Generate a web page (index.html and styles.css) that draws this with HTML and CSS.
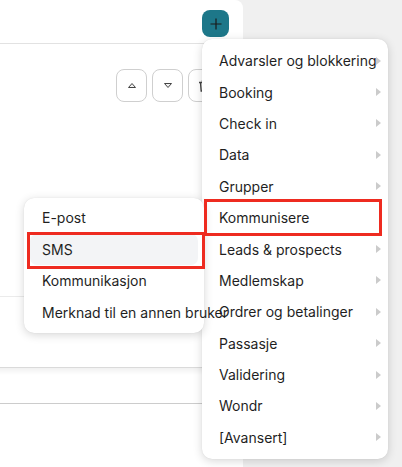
FILE: index.html
```html
<!DOCTYPE html>
<html lang="no">
<head>
    <meta charset="UTF-8">
    <meta name="viewport" content="width=device-width, initial-scale=1.0">
    <title>Legg til handling</title>
    <link rel="stylesheet" href="styles.css">
</head>
<body>
    <div class="panel">
        <div class="panel-head">
            <button class="add-btn" aria-label="Legg til">
                <svg width="12" height="12" viewBox="0 0 12 12"><path d="M6 0.5v11M0.5 6h11" stroke="#1a1a1a" stroke-width="1.2"/></svg>
            </button>
        </div>
        <div class="toolbar">
            <button class="tool-btn" aria-label="Flytt opp">
                <svg width="10" height="7" viewBox="0 0 10 7"><path d="M1.5 5.5h7L5 1.5z" fill="#f2f2f2" stroke="#444" stroke-width="1" stroke-linejoin="round"/></svg>
            </button>
            <button class="tool-btn" aria-label="Flytt ned">
                <svg width="10" height="7" viewBox="0 0 10 7"><path d="M1.5 1.5h7L5 5.5z" fill="#f2f2f2" stroke="#444" stroke-width="1" stroke-linejoin="round"/></svg>
            </button>
            <button class="tool-btn" aria-label="Slett">
                <svg width="12" height="12" viewBox="0 0 12 12"><path d="M1 2.5h10M4.5 2.5V1h3v1.5M2.5 2.5l0.7 8.5h5.6l0.7-8.5" fill="none" stroke="#444" stroke-width="1.4"/></svg>
            </button>
        </div>
        <div class="section"></div>
        <div class="section-shade"></div>
        <div class="section-last"></div>
    </div>

    <ul class="menu main-menu">
        <li class="menu-item has-sub">Advarsler og blokkering</li>
        <li class="menu-item has-sub">Booking</li>
        <li class="menu-item has-sub">Check in</li>
        <li class="menu-item has-sub">Data</li>
        <li class="menu-item has-sub">Grupper</li>
        <li class="menu-item">Kommunisere</li>
        <li class="menu-item has-sub">Leads &amp; prospects</li>
        <li class="menu-item has-sub">Medlemskap</li>
        <li class="menu-item has-sub">Ordrer og betalinger</li>
        <li class="menu-item has-sub">Passasje</li>
        <li class="menu-item has-sub">Validering</li>
        <li class="menu-item has-sub">Wondr</li>
        <li class="menu-item has-sub">[Avansert]</li>
    </ul>

    <ul class="menu sub-menu">
        <li class="menu-item">E-post</li>
        <li class="menu-item is-hover">SMS</li>
        <li class="menu-item">Kommunikasjon</li>
        <li class="menu-item">Merknad til en annen bruker</li>
    </ul>

    <div class="mark mark-main"></div>
    <div class="mark mark-sub"></div>
</body>
</html>
```

FILE: styles.css
```css
body {
    margin: 0;
    width: 402px;
    height: 467px;
    overflow: hidden;
    position: relative;
    background: #f0f0f0;
    font-family: Inter, "Noto Sans", sans-serif;
    font-size: 14px;
    color: #1f1f1f;
}
.panel {
    width: 243px;
    height: 467px;
    background: #fff;
    border-top-right-radius: 8px;
    display: flex;
    flex-direction: column;
}
.panel-head {
    height: 44px;
    border-bottom: 1px solid #e2e2e2;
    display: flex;
    justify-content: flex-end;
    align-items: flex-start;
    padding: 10px 14px 0 0;
    box-sizing: border-box;
}
.add-btn {
    width: 27px;
    height: 27px;
    border: 0;
    border-radius: 8px;
    background: #1d7789;
    display: flex;
    align-items: center;
    justify-content: center;
    padding: 0;
}
.toolbar {
    display: flex;
    justify-content: flex-end;
    gap: 5px;
    padding: 25px 24px 0 0;
    height: 253px;
    box-sizing: border-box;
    border-bottom: 1px solid #ebebeb;
}
.tool-btn {
    width: 31px;
    height: 33px;
    border: 1px solid #cfcfcf;
    border-radius: 8px;
    background: #fff;
    display: flex;
    align-items: center;
    justify-content: center;
    padding: 0;
}
.section {
    height: 70px;
}
.section-shade {
    height: 35px;
    border-top: 1px solid #dadada;
    background: linear-gradient(#f1f1f1, #fff 7px);
    border-bottom: 1px solid #cccccc;
}
.section-last {
    flex: 1;
}
.menu {
    list-style: none;
    margin: 0;
    background: #fff;
    border-radius: 10px;
    box-shadow: 0 2px 10px rgba(0, 0, 0, 0.16), 0 0 1px rgba(0, 0, 0, 0.12);
    position: absolute;
    box-sizing: border-box;
}
.main-menu {
    left: 202px;
    top: 39px;
    width: 186px;
    padding: 6px 0;
}
.main-menu .menu-item {
    height: 31.4px;
    padding-left: 17px;
    display: flex;
    align-items: center;
    position: relative;
    white-space: nowrap;
}
.has-sub::after {
    content: "";
    position: absolute;
    right: 7px;
    top: 50%;
    margin-top: -4px;
    border-left: 5px solid #cbcbcb;
    border-top: 4px solid transparent;
    border-bottom: 4px solid transparent;
}
.sub-menu {
    left: 24px;
    top: 198px;
    width: 180px;
    padding: 4px 6px 5px;
}
.sub-menu .menu-item {
    height: 31.6px;
    padding-left: 12px;
    display: flex;
    align-items: center;
    white-space: nowrap;
    border-radius: 7px;
}
.sub-menu .is-hover {
    background: #f3f4f6;
}
.mark {
    position: absolute;
    border: 3px solid #ee2b20;
    box-sizing: border-box;
}
.mark-main {
    left: 204px;
    top: 199px;
    width: 178px;
    height: 37px;
}
.mark-sub {
    left: 27px;
    top: 232px;
    width: 178px;
    height: 37px;
}
```
